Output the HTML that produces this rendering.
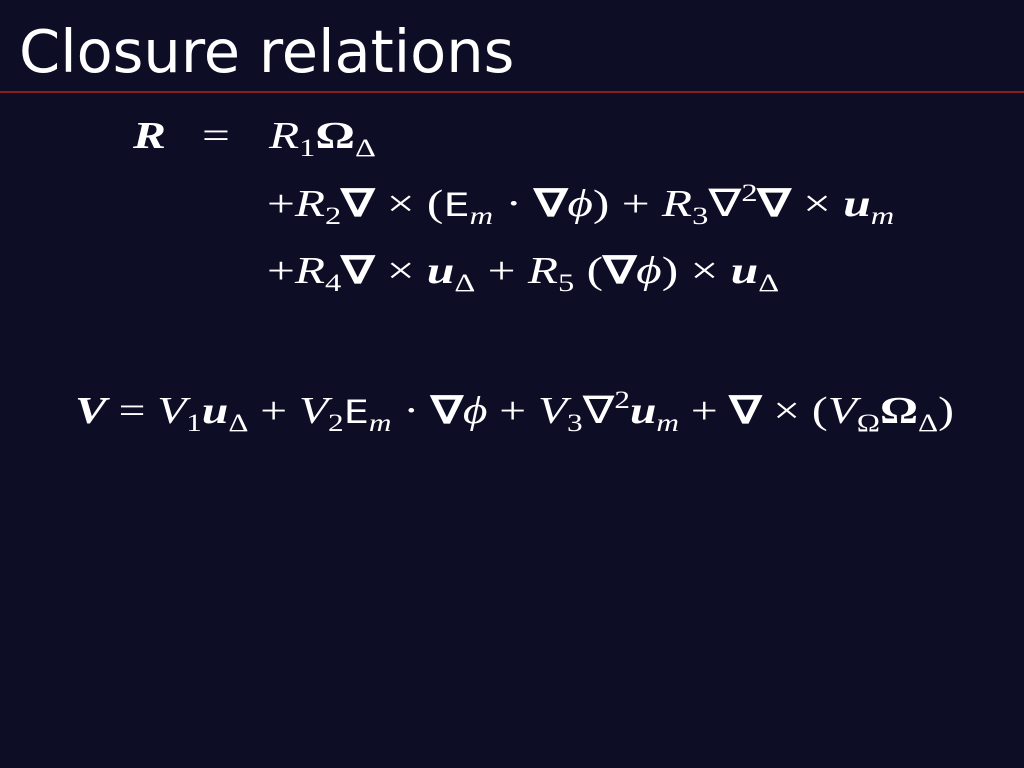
<!DOCTYPE html>
<html><head><meta charset="utf-8"><style>
html,body{margin:0;padding:0}
body{width:1024px;height:768px;background:#0d0d26;position:relative;overflow:hidden;color:#fff}
.t{position:absolute;left:19px;top:22px;font-family:"DejaVu Sans",sans-serif;font-size:59px;line-height:1;white-space:nowrap}
.rule{position:absolute;left:0;top:91px;width:1024px;height:2px;background:#8a1d1d}
.m{position:absolute;font-family:"Liberation Serif",serif;font-size:38px;white-space:nowrap;line-height:1;transform-origin:0 0}
.w{transform:scaleX(1.3)}
i{font-style:italic}
b{font-weight:bold}
.bi{font-weight:bold;font-style:italic}
sub{font-size:25px;vertical-align:-8px;line-height:0}
sup{font-size:25px;vertical-align:15px;line-height:0}
.sf{font-family:"DejaVu Sans",sans-serif;font-size:32px}
</style></head><body>
<div class="t">Closure relations</div>
<div class="rule"></div>
<div class="m w" style="left:133px;top:117px"><span class="bi">R</span></div>
<div class="m w" style="left:202px;top:117px">=</div>
<div class="m w" style="left:269px;top:117px"><i>R</i><sub>1</sub><b>Ω</b><sub>Δ</sub></div>
<div class="m w" style="left:267px;top:185px">+<i>R</i><sub>2</sub><b>∇</b> × (<span class="sf">E</span><sub><i>m</i></sub> · <b>∇</b><i>ϕ</i>) + <i>R</i><sub>3</sub>∇<sup>2</sup><b>∇</b> × <span class="bi">u</span><sub><i>m</i></sub></div>
<div class="m w" style="left:267px;top:252px">+<i>R</i><sub>4</sub><b>∇</b> × <span class="bi">u</span><sub>Δ</sub> + <i>R</i><sub>5</sub> (<b>∇</b><i>ϕ</i>) × <span class="bi">u</span><sub>Δ</sub></div>
<div class="m" style="left:75px;top:392px;transform:scaleX(1.25)"><span class="bi">V</span> = <i>V</i><sub>1</sub><span class="bi">u</span><sub>Δ</sub> + <i>V</i><sub>2</sub><span class="sf">E</span><sub><i>m</i></sub> · <b>∇</b><i>ϕ</i> + <i>V</i><sub>3</sub>∇<sup>2</sup><span class="bi">u</span><sub><i>m</i></sub> + <b>∇</b> × (<i>V</i><sub>Ω</sub><b>Ω</b><sub>Δ</sub>)</div>
</body></html>
